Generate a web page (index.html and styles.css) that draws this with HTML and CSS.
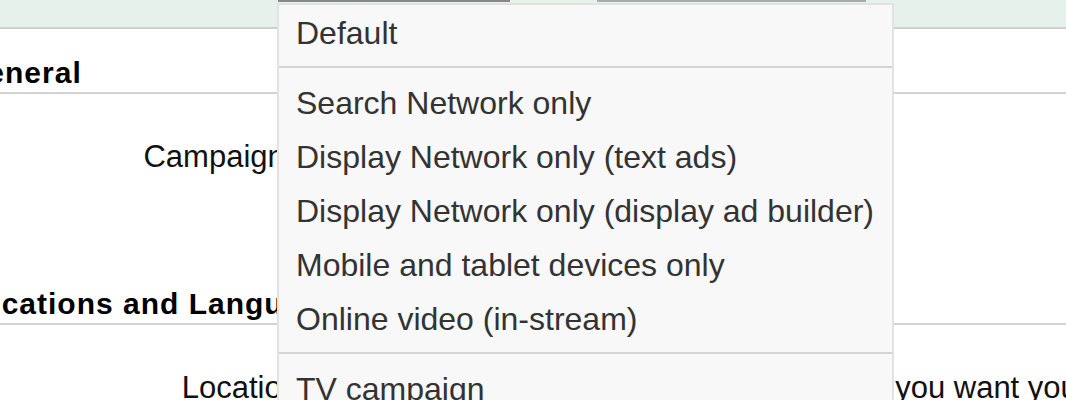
FILE: index.html
```html
<!DOCTYPE html>
<html lang="en">
<head>
  <meta charset="UTF-8">
  <title>Campaign settings</title>
  <link rel="stylesheet" href="styles.css">
</head>
<body>
  <div class="topbar">
    <div class="tab tab-active"></div>
    <div class="tab"></div>
  </div>

  <div class="content">
    <div class="section">
      <h3 class="section-title">General</h3>
      <div class="section-body">
        <div class="field-row">
          <div class="field-label">Campaign type</div>
          <div class="field-value">Search &amp; Display Networks</div>
        </div>
      </div>
    </div>

    <div class="section">
      <h3 class="section-title">Locations and Languages</h3>
      <div class="section-body">
        <div class="field-row">
          <div class="field-label">Locations <span class="help">?</span></div>
          <div class="field-value">Choose the specific locations where you want your ads to appear</div>
        </div>
      </div>
    </div>
  </div>

  <ul class="menu">
    <li class="menu-item">Default</li>
    <li class="menu-sep"></li>
    <li class="menu-item">Search Network only</li>
    <li class="menu-item">Display Network only (text ads)</li>
    <li class="menu-item">Display Network only (display ad builder)</li>
    <li class="menu-item">Mobile and tablet devices only</li>
    <li class="menu-item">Online video (in-stream)</li>
    <li class="menu-sep"></li>
    <li class="menu-item">TV campaign</li>
  </ul>
</body>
</html>
```

FILE: styles.css
```css
body {
  margin: 0;
  font-family: "Liberation Sans", Arial, sans-serif;
  font-size: 31px;
  color: #111;
  background: #fff;
  overflow: hidden;
}
.topbar {
  display: flex;
  gap: 87px;
  height: 27px;
  padding-left: 278px;
  background: #e5f1ea;
  border-bottom: 2px solid #cfcfcf;
}
.tab {
  width: 269px;
  height: 2px;
  background: #aaaaaa;
}
.tab-active {
  width: 232px;
  background: #888888;
}
.content {
  margin-left: -37px;
}
.section-title {
  margin: 0;
  padding: 27px 0 2px;
  font-size: 30px;
  line-height: 34px;
  font-weight: bold;
  letter-spacing: 1px;
  color: #000;
  border-bottom: 2px solid #d3d3d3;
}
.section-body {
  padding: 45px 0 85px;
}
.field-row {
  display: grid;
  grid-template-columns: 389px 1fr;
  column-gap: 40px;
  line-height: 36px;
  white-space: nowrap;
}
.field-label {
  text-align: right;
}
.help {
  display: inline-block;
  width: 28px;
  height: 28px;
  margin-left: 1px;
  border-radius: 50%;
  background: #9aa;
  color: #fff;
  font-size: 20px;
  line-height: 28px;
  text-align: center;
  vertical-align: middle;
}

/* dropdown of campaign types, open over the form */
.menu {
  position: absolute;
  left: 277px;
  top: 3px;
  width: 613px;
  height: 420px;
  margin: 0;
  padding: 1px 0 0;
  list-style: none;
  background: #f8f8f8;
  border: 2px solid #e2e2e2;
  color: #333;
  font-size: 32px;
}
.menu-item {
  padding-left: 17px;
  line-height: 54px;
  white-space: nowrap;
}
.menu-sep {
  height: 2px;
  margin: 6px 0 8px;
  background: #d4d4d4;
}
```
